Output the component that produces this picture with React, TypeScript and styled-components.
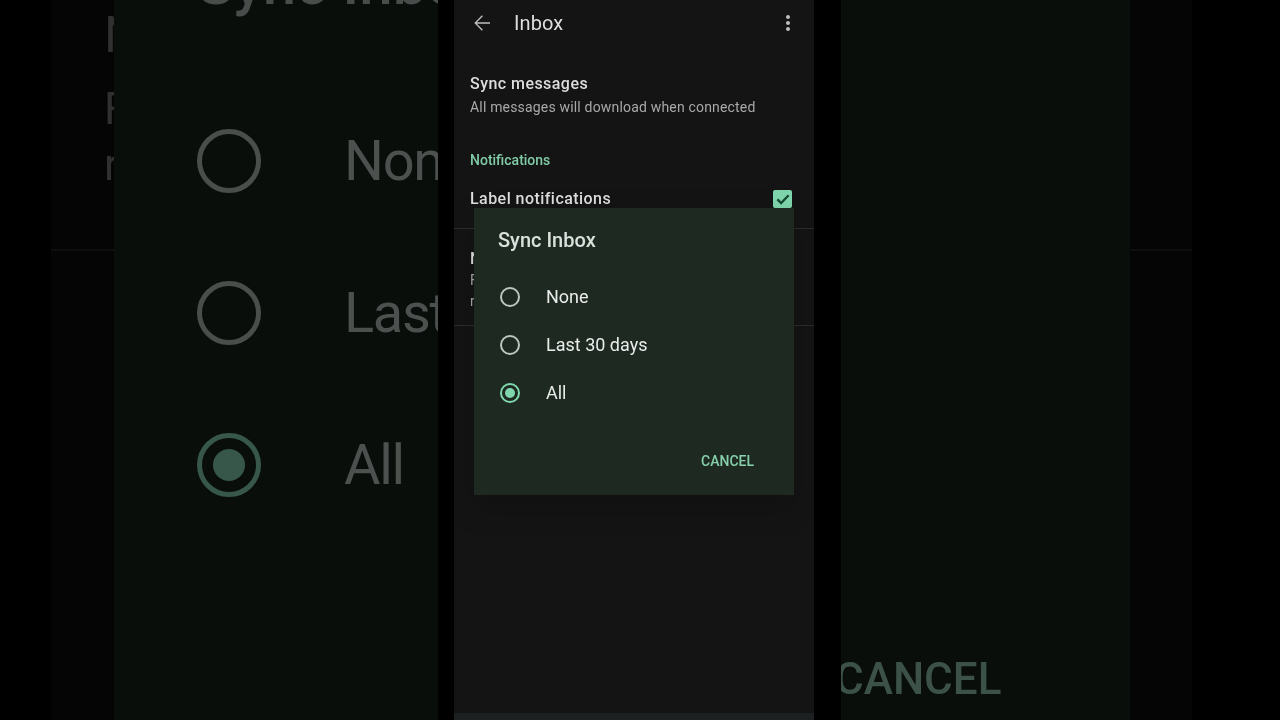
import React from "react";
import styled, { createGlobalStyle } from "styled-components";

const Global = createGlobalStyle`
  html, body { margin: 0; padding: 0; background: #000; }
  * { box-sizing: border-box; }
`;

const Page = styled.div`
  display: flex;
  width: 1280px;
  height: 720px;
  overflow: hidden;
  background: #000;
  font-family: Roboto, "Liberation Sans", sans-serif;
  filter: blur(0.45px);
`;

const BackdropPane = styled.div<{ $start: number; $width: number }>`
  display: flex;
  flex: none;
  margin-left: ${(p) => p.$start}px;
  width: ${(p) => p.$width}px;
  height: 720px;
  overflow: hidden;
`;

const Strip = styled.div<{ $width: number }>`
  flex: none;
  display: flex;
  flex-direction: column;
  width: ${(p) => p.$width}px;
  height: 720px;
  overflow: hidden;
  background: #050505;
`;

const StripDivider = styled.div`
  height: 2px;
  background: #0e0e0e;
  margin-top: 249px;
`;

const StripLetters = styled.div`
  height: 249px;
  margin-bottom: -249px;
  padding-left: 53px;
  padding-top: 10px;
  color: #303030;
  line-height: 1;
`;

const StripHeading = styled.div`
  font-size: 50px;
  font-weight: 400;
  height: 77px;
`;

const StripText = styled.div`
  font-size: 44px;
  height: 56px;
`;

const BigDialog = styled.div<{ $pad: number }>`
  flex: 1;
  height: 720px;
  min-width: 0;
  overflow: hidden;
  display: flex;
  flex-direction: column;
  padding-left: ${(p) => p.$pad}px;
  background: #090e0b;
  white-space: nowrap;
`;

const BigTitle = styled.div`
  height: 84px;
  margin-top: -46px;
  margin-bottom: 47px;
  font-size: 60px;
  line-height: 60px;
  font-weight: 500;
  color: #484c4a;
`;

const BigRow = styled.div`
  display: flex;
  align-items: center;
  flex: none;
  height: 152px;
  gap: 83px;
`;

const BigRadio = styled.span<{ $on?: boolean }>`
  flex: none;
  display: flex;
  align-items: center;
  justify-content: center;
  width: 64px;
  height: 64px;
  border-radius: 50%;
  border: 5px solid ${(p) => (p.$on ? "#37574b" : "#494e4b")};
  &::after {
    content: "";
    display: ${(p) => (p.$on ? "block" : "none")};
    width: 32px;
    height: 32px;
    border-radius: 50%;
    background: #37574b;
  }
`;

const BigLabel = styled.span`
  font-size: 56px;
  line-height: 64px;
  color: #4c504e;
  letter-spacing: -1.3px;
`;

const BigCancel = styled.div`
  font-size: 44px;
  line-height: 50px;
  font-weight: 500;
  color: #3c5249;
`;

const RightCancelRow = styled.div`
  margin-top: 654px;
  margin-left: -6px;
`;

const Screen = styled.div`
  position: relative;
  flex: none;
  display: flex;
  flex-direction: column;
  margin-left: 16px;
  width: 360px;
  height: 720px;
  background: #141414;
`;

const AppBar = styled.header`
  flex: none;
  display: flex;
  align-items: center;
  height: 46px;
  padding: 0 14px 0 16px;
  color: #bdbdbd;
`;

const AppTitle = styled.h1`
  flex: 1;
  margin: 0 0 0 20px;
  font-size: 20px;
  font-weight: 400;
  color: #dedede;
  letter-spacing: 0.1px;
`;

const Body = styled.main`
  flex: 1;
  display: flex;
  flex-direction: column;
`;

const SyncBlock = styled.section`
  padding: 27px 16px 0;
  height: 104px;
`;

const ItemTitle = styled.div`
  font-size: 16px;
  line-height: 22px;
  font-weight: 500;
  color: #dedede;
  letter-spacing: 0.45px;
`;

const ItemSub = styled.div`
  font-size: 14px;
  line-height: 24px;
  color: #a9a9a9;
  letter-spacing: 0.18px;
`;

const SectionLabel = styled.div`
  padding: 0 16px;
  font-size: 14px;
  line-height: 20px;
  font-weight: 500;
  color: #80cba6;
`;

const CheckRow = styled.div`
  display: flex;
  align-items: center;
  justify-content: space-between;
  height: 59px;
  padding: 0 22px 0 16px;
  border-bottom: 1px solid #2c2c2c;
`;

const Checkbox = styled.span`
  display: flex;
  align-items: center;
  justify-content: center;
  width: 19px;
  height: 18px;
  border-radius: 2px;
  background: #7fd6ad;
  color: #144a32;
`;

const HiddenRow = styled.div`
  height: 97px;
  padding: 19px 16px 0;
  border-bottom: 1px solid #2c2c2c;
  color: #a9a9a9;
  font-size: 14px;
  line-height: 21px;
`;

const BottomBar = styled.div`
  flex: none;
  height: 7px;
  background: #1c2020;
`;

const Dialog = styled.div`
  position: absolute;
  left: 20px;
  top: 208px;
  display: flex;
  flex-direction: column;
  width: 320px;
  height: 287px;
  padding: 0 24px;
  background: #1d2921;
  box-shadow: 0 12px 30px rgba(0, 0, 0, 0.18);
`;

const DialogTitle = styled.h2`
  margin: 0;
  height: 65px;
  padding-top: 20px;
  font-size: 20px;
  line-height: 25px;
  font-weight: 500;
  color: #dbe1dd;
`;

const Options = styled.div`
  display: flex;
  flex-direction: column;
`;

const Option = styled.div`
  display: flex;
  align-items: center;
  height: 48px;
  gap: 26px;
  padding-left: 2px;
`;

const Radio = styled.span<{ $on?: boolean }>`
  flex: none;
  display: flex;
  align-items: center;
  justify-content: center;
  width: 20px;
  height: 20px;
  border-radius: 50%;
  border: 2px solid ${(p) => (p.$on ? "#7fd6ad" : "#bcc5bf")};
  &::after {
    content: "";
    display: ${(p) => (p.$on ? "block" : "none")};
    width: 10px;
    height: 10px;
    border-radius: 50%;
    background: #7fd6ad;
  }
`;

const OptionLabel = styled.span`
  font-size: 18px;
  line-height: 22px;
  padding-bottom: 1px;
  color: #e9ecea;
`;

const Actions = styled.div`
  display: flex;
  justify-content: flex-end;
  margin-top: 34px;
  padding-right: 16px;
`;

const TextButton = styled.span`
  font-size: 14px;
  line-height: 20px;
  font-weight: 500;
  color: #86d1ac;
`;

const Spacer = styled.div`
  flex: 1;
`;

const options = [
  { label: "None" },
  { label: "Last 30 days" },
  { label: "All", on: true },
];

export default function App() {
  return (
    <Page>
      <Global />
      <BackdropPane $start={51} $width={387}>
        <Strip $width={63}>
          <StripLetters>
            <StripHeading>N</StripHeading>
            <StripText>F</StripText>
            <StripText>r</StripText>
          </StripLetters>
          <StripDivider />
        </Strip>
        <BigDialog $pad={83}>
          <BigTitle>Sync Inbox</BigTitle>
          {options.map((o) => (
            <BigRow key={o.label}>
              <BigRadio $on={o.on} />
              <BigLabel>{o.label}</BigLabel>
            </BigRow>
          ))}
        </BigDialog>
      </BackdropPane>

      <Screen>
        <AppBar>
          <svg width="24" height="24" viewBox="0 0 24 24" fill="currentColor">
            <path d="M20 11.3H6.9l6-6-1-1L4.300 12l7.600 7.700 1-1-6-6H20z" />
          </svg>
          <AppTitle>Inbox</AppTitle>
          <svg width="24" height="24" viewBox="0 0 24 24" fill="currentColor">
            <path d="M12 8c1.1 0 2-.9 2-2s-.9-2-2-2-2 .9-2 2 .9 2 2 2zm0 2c-1.100 0-2 .9-2 2s.9 2 2 2 2-.9 2-2-.9-2-2-2zm0 6c-1.100 0-2 .9-2 2s.9 2 2 2 2-.9 2-2-.9-2-2-2z" />
          </svg>
        </AppBar>
        <Body>
          <SyncBlock>
            <ItemTitle>Sync messages</ItemTitle>
            <ItemSub>All messages will download when connected</ItemSub>
          </SyncBlock>
          <SectionLabel>Notifications</SectionLabel>
          <CheckRow>
            <ItemTitle>Label notifications</ItemTitle>
            <Checkbox>
              <svg width="18" height="18" viewBox="0 0 24 24" fill="none" stroke="currentColor" strokeWidth="3">
                <path d="M4.500 12.500l5 5L19.500 7" />
              </svg>
            </Checkbox>
          </CheckRow>
          <HiddenRow>
            <ItemTitle>N</ItemTitle>
            <div>F</div>
            <div>r</div>
          </HiddenRow>
          <Spacer />
        </Body>
        <BottomBar />
        <Dialog>
          <DialogTitle>Sync Inbox</DialogTitle>
          <Options>
            {options.map((o) => (
              <Option key={o.label}>
                <Radio $on={o.on} />
                <OptionLabel>{o.label}</OptionLabel>
              </Option>
            ))}
          </Options>
          <Actions>
            <TextButton>CANCEL</TextButton>
          </Actions>
        </Dialog>
      </Screen>

      <BackdropPane $start={27} $width={351}>
        <BigDialog $pad={0}>
          <RightCancelRow>
            <BigCancel>CANCEL</BigCancel>
          </RightCancelRow>
        </BigDialog>
        <Strip $width={62}>
          <StripDivider />
        </Strip>
      </BackdropPane>
    </Page>
  );
}
